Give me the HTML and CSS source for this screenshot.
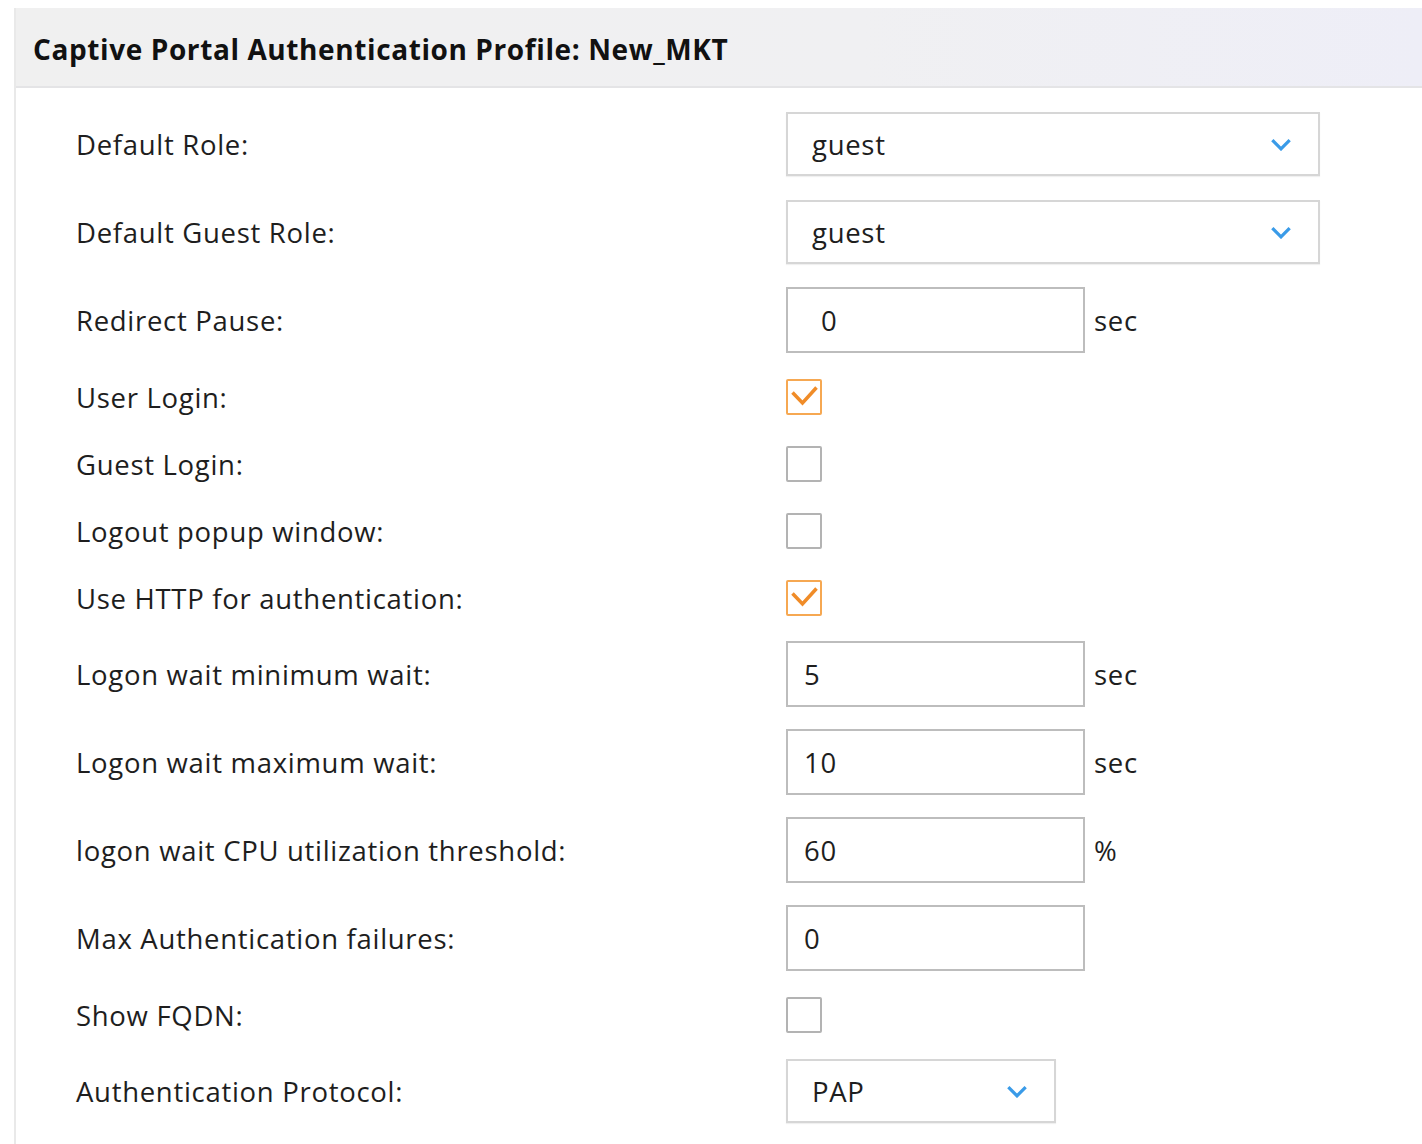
FILE: index.html
```html
<!DOCTYPE html>
<html>
<head>
<meta charset="utf-8">
<link rel="stylesheet" href="styles.css">
</head>
<body>
<div class="panel">
  <div class="header"><h1 class="title">Captive Portal Authentication Profile: New_MKT</h1></div>
  <div class="form">
    <div class="row f">
      <div class="label">Default Role:</div>
      <div class="select wide"><span>guest</span><svg class="chev" viewBox="0 0 20 12"><path d="M2 2 L10 10 L18 2" /></svg></div>
    </div>
    <div class="row f">
      <div class="label">Default Guest Role:</div>
      <div class="select wide"><span>guest</span><svg class="chev" viewBox="0 0 20 12"><path d="M2 2 L10 10 L18 2" /></svg></div>
    </div>
    <div class="row f">
      <div class="label">Redirect Pause:</div>
      <div class="input pad-l">0</div><span class="unit">sec</span>
    </div>
    <div class="row c">
      <div class="label">User Login:</div>
      <div class="cb on"><svg viewBox="0 0 32 32"><path d="M4.5 11.5 L14.5 22 L28.5 6.5"/></svg></div>
    </div>
    <div class="row c">
      <div class="label">Guest Login:</div>
      <div class="cb"></div>
    </div>
    <div class="row c">
      <div class="label">Logout popup window:</div>
      <div class="cb"></div>
    </div>
    <div class="row c">
      <div class="label">Use HTTP for authentication:</div>
      <div class="cb on"><svg viewBox="0 0 32 32"><path d="M4.5 11.5 L14.5 22 L28.5 6.5"/></svg></div>
    </div>
    <div class="row f">
      <div class="label">Logon wait minimum wait:</div>
      <div class="input">5</div><span class="unit">sec</span>
    </div>
    <div class="row f">
      <div class="label">Logon wait maximum wait:</div>
      <div class="input">10</div><span class="unit">sec</span>
    </div>
    <div class="row f">
      <div class="label">logon wait CPU utilization threshold:</div>
      <div class="input">60</div><span class="unit">%</span>
    </div>
    <div class="row f">
      <div class="label">Max Authentication failures:</div>
      <div class="input">0</div>
    </div>
    <div class="row c">
      <div class="label">Show FQDN:</div>
      <div class="cb"></div>
    </div>
    <div class="row f">
      <div class="label">Authentication Protocol:</div>
      <div class="select narrow"><span>PAP</span><svg class="chev" viewBox="0 0 20 12"><path d="M2 2 L10 10 L18 2" /></svg></div>
    </div>
  </div>
</div>
</body>
</html>
```

FILE: styles.css
```css
html, body {
  margin: 0;
  padding: 0;
  background: #ffffff;
}
body {
  font-family: "Open Sans", "Noto Sans", sans-serif;
  color: #1e1e1e;
  height: 1144px;
  overflow: hidden;
}
.panel {
  margin: 8px 0 0 14px;
  border-left: 2px solid #e9e9e9;
  height: 1136px;
  overflow: hidden;
}
.header {
  height: 80px;
  background: linear-gradient(to right, #f0f0f0 0%, #f0f0f2 60%, #eeeef7 100%);
  border-bottom: 2px solid #e4e4e6;
  display: flex;
  align-items: center;
  padding: 4px 0 0 17px;
  box-sizing: border-box;
}
.title {
  margin: 0;
  font-size: 28px;
  font-weight: 700;
  color: #111;
  letter-spacing: 0.6px;
}
.form {
  padding: 23px 0 0 60px;
}
.row {
  display: flex;
  align-items: center;
  font-size: 27.5px;
  letter-spacing: 0.7px;
}
.row.f { height: 66px; }
.row.c { height: 36px; }
.row + .row.f { margin-top: 22px; }
.row.f + .row.c { margin-top: 26px; }
.row.c + .row.c { margin-top: 31px; }
.row.c + .row.f { margin-top: 25px; }
.label {
  width: 710px;
  color: #1e1e1e;
}
.select {
  height: 64px;
  border: 2px solid #d6d6d6;
  box-sizing: border-box;
  display: flex;
  align-items: center;
  justify-content: space-between;
  padding: 0 26px 0 24px;
  background: #fff;
  box-shadow: 0 1px 1px rgba(0,0,0,0.06);
}
.select.wide { width: 534px; }
.select.narrow { width: 270px; }
.chev {
  width: 22px;
  height: 13px;
  fill: none;
  stroke: #3a9be8;
  stroke-width: 3;
}
.input {
  width: 299px;
  height: 66px;
  border: 2px solid #bdbdbd;
  box-sizing: border-box;
  display: flex;
  align-items: center;
  padding-left: 16px;
}
.input.pad-l { padding-left: 33px; }
.unit {
  margin-left: 9px;
}
.cb {
  width: 36px;
  height: 36px;
  border: 2px solid #b3b3b3;
  border-radius: 2px;
  box-sizing: border-box;
  background: #fff;
}
.cb.on {
  border-color: #f6a852;
}
.cb svg {
  display: block;
  width: 32px;
  height: 32px;
  fill: none;
  stroke: #f08c28;
  stroke-width: 3.5;
}
```
